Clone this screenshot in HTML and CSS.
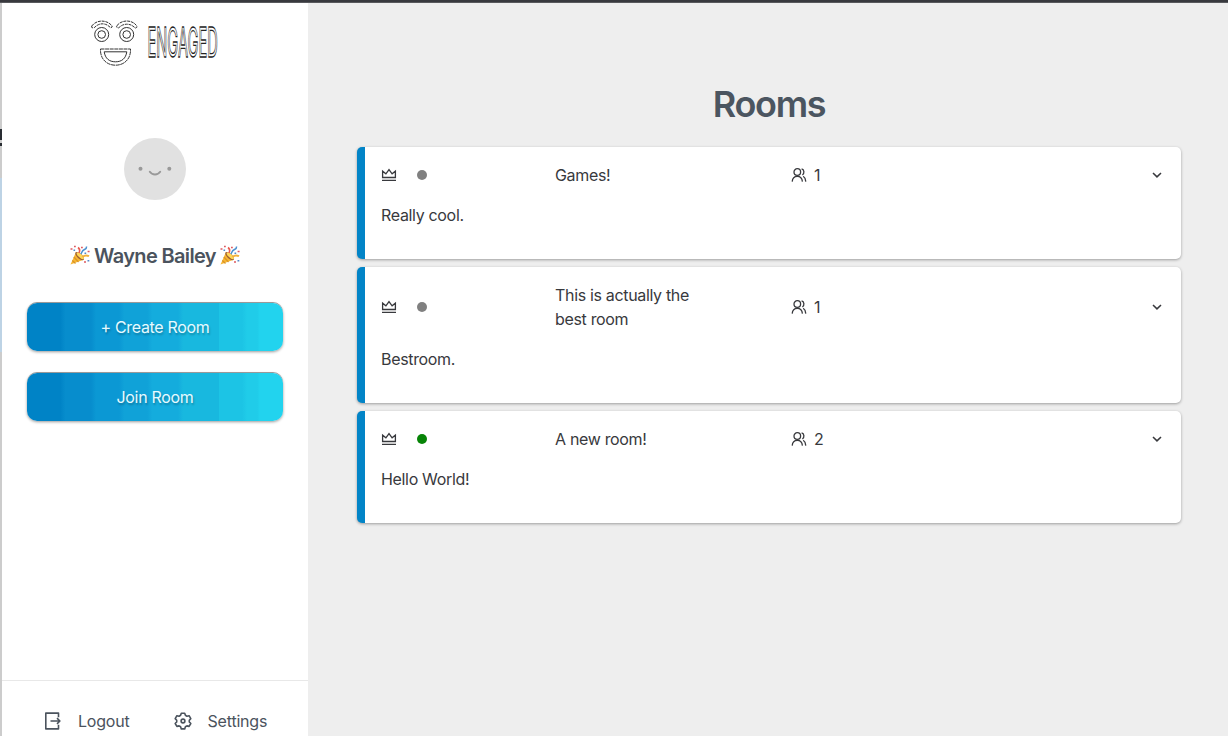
FILE: index.html
```html
<!DOCTYPE html>
<html lang="en">
<head>
<meta charset="utf-8">
<title>Engaged</title>
<link rel="stylesheet" href="styles.css">
</head>
<body>
<svg class="defs" width="0" height="0" aria-hidden="true">
  <symbol id="crown" viewBox="0 0 16 16"><path d="M1.600 10.500V4.200l3.300 2.600L8 2.700l3.100 4.100 3.300-2.600v6.300zM1 13.400h14"/></symbol>
  <symbol id="users" viewBox="0 0 16 16"><circle cx="6.300" cy="5" r="3.300"/><path d="M1.200 14.600c.3-3.400 2.200-5.200 5.100-5.200s4.800 1.800 5.100 5.200M10.600 1.900c2.800.6 3 4.600.8 6.100M12.200 9.300c1.600 1 2.400 2.700 2.600 5.300"/></symbol>
  <symbol id="chevron" viewBox="0 0 10 10"><path d="M1 3 5 6.900 9 3"/></symbol>
  <symbol id="popper" viewBox="0 0 22 22">
    <path d="M1.500 19.500 6.800 7.500l7.800 7.200z" fill="#f7b733"/>
    <path d="m4.800 12 4.700 5M3.300 15.500l3.200 3" stroke="#d99228" stroke-width="1.200"/>
    <ellipse cx="10.700" cy="11.100" rx="2.500" ry="5.500" transform="rotate(-47 10.700 11.100)" fill="#9c5f35"/>
    <ellipse cx="11.300" cy="10.800" rx="1.800" ry="4.600" transform="rotate(-47 11.300 10.800)" fill="#ffd659"/>
    <path d="M10 8c1-2 1-4-1-5.500" stroke="#e85a4f" stroke-width="1.600" fill="none"/>
    <path d="M12 9c1-2 1-3.500 3.500-4.500s2-2 2-3" stroke="#4a90d0" stroke-width="1.500" fill="none"/>
    <path d="M13.500 12c2-2 4-2 6.500-.8" stroke="#f3b13c" stroke-width="2" fill="none"/>
    <path d="M1.500 4h2M5 1.500h1.800M12 2.500h1.800M18.600 6.500h2M15 17h2" stroke="#df5b62" stroke-width="1.600"/>
    <path d="M4.500 5.200h1.600M18.500 15.800h1.800M15.500 8.300h1.700" stroke="#5489ca" stroke-width="1.500"/>
  </symbol>
</svg>
<div class="topbar"></div>
<div class="app">
  <div class="edge"><div class="edge-mark"></div><div class="edge-tick"></div><div class="edge-select"></div></div>
  <aside class="sidebar">
    <svg class="logo" viewBox="0 0 130 60" role="img" aria-label="Engaged">
      <g fill="#fff" stroke="#333" stroke-width="1">
        <path d="M1.700 7C6.500.6 16.500.4 21.700 6.500q1.500 1.800-1 2.300c-5-5.300-11.500-5.300-16.500-.1Q1 9.500 1.700 7zM27 6.500c5-6.100 15-5.900 19.500 0q1.400 2-1.200 2.600c-4.600-5-11.600-5.300-16.600-.3Q25.600 9 27 6.500z" stroke-dasharray="3 .8"/>
        <circle cx="11.700" cy="15.500" r="7"/><circle cx="11.700" cy="15.500" r="3.800"/>
        <circle cx="36.700" cy="15.500" r="7"/><circle cx="36.700" cy="15.500" r="3.800"/>
        <path d="M10.500 30h30c.5 10-6.300 16.200-15 16.200s-15.500-6.200-15-16.200z" stroke-dasharray="4 .6"/>
        <path d="M14.200 32.800h22.600c-1 6.700-5 10-11.300 10s-10.300-3.300-11.300-10z"/>
      </g>
      <g transform="translate(57.500 38) scale(.352 1)"><text class="wordmark" textLength="200">ENGAGED</text></g>
    </svg>
    <svg class="avatar" viewBox="0 0 62 62"><circle cx="31" cy="31" r="31" fill="#e1e1e1"/><circle cx="16.500" cy="30.700" r="2" fill="#999"/><circle cx="45.300" cy="30.700" r="2" fill="#999"/><path d="M25.800 33.700c2.500 3.600 7.900 3.600 10.400 0" fill="none" stroke="#999" stroke-width="2" stroke-linecap="round"/></svg>
    <h2 class="user"><svg class="popper"><use href="#popper"/></svg><span>Wayne Bailey</span><svg class="popper"><use href="#popper"/></svg></h2>
    <div class="actions">
      <button class="btn">+ Create Room</button>
      <button class="btn">Join Room</button>
    </div>
    <nav class="footer">
      <a class="link"><svg class="nav-icon" viewBox="0 0 18 18"><path d="M14.500 5.300V1.100H1.800v15.800h12.700v-4.200M6.500 9h9.300M13 6.200 15.900 9 13 11.800"/></svg><span>Logout</span></a>
      <a class="link"><svg class="nav-icon" viewBox="0 0 18 18"><path d="M7.300 1.200h3.400l.7 2.100 1.500.9 2.200-.5 1.700 2.900-1.500 1.600v1.700l1.500 1.600-1.700 2.900-2.200-.5-1.500.9-.7 2.100H7.300l-.7-2.100-1.500-.9-2.200.5-1.700-2.900 1.500-1.600V8.200L1.200 6.600l1.700-2.900 2.200.5 1.500-.9z"/><circle cx="9" cy="9" r="1.900"/></svg><span>Settings</span></a>
    </nav>
  </aside>
  <main class="main">
    <h1 class="title">Rooms</h1>
    <section class="rooms">
      <article class="room">
        <header class="room-head"><svg class="icon"><use href="#crown"/></svg><i class="dot"></i><span class="name">Games!</span><span class="count"><svg class="icon"><use href="#users"/></svg>1</span><svg class="chevron"><use href="#chevron"/></svg></header>
        <p class="desc">Really cool.</p>
      </article>
      <article class="room">
        <header class="room-head"><svg class="icon"><use href="#crown"/></svg><i class="dot"></i><span class="name">This is actually the best room</span><span class="count"><svg class="icon"><use href="#users"/></svg>1</span><svg class="chevron"><use href="#chevron"/></svg></header>
        <p class="desc">Bestroom.</p>
      </article>
      <article class="room">
        <header class="room-head"><svg class="icon"><use href="#crown"/></svg><i class="dot online"></i><span class="name">A new room!</span><span class="count"><svg class="icon"><use href="#users"/></svg>2</span><svg class="chevron"><use href="#chevron"/></svg></header>
        <p class="desc">Hello World!</p>
      </article>
    </section>
  </main>
</div>
</body>
</html>
```
FILE: styles.css
```css
* { box-sizing: border-box; }
body { margin: 0; height: 736px; overflow: hidden; display: flex; flex-direction: column; font: 16px/24px Inter, "Liberation Sans", sans-serif; letter-spacing: -.33px; color: #38393d; background: #eee; }
h1, h2, p { margin: 0; }
.defs { position: absolute; }
.topbar { height: 3px; flex: none; background: #38393e; border-bottom: 1px solid #58595d; }
.app { flex: 1; display: flex; min-height: 0; }
.edge { width: 2px; background: #ccc; display: flex; flex-direction: column; }
.edge-mark { height: 11px; margin-top: 126px; background: #292d33; }
.edge-tick { height: 3px; margin-top: 3px; background: #292d33; }
.edge-select { height: 174px; margin-top: 32px; background: #bdd3e5; }
.sidebar { width: 306px; background: #fff; display: flex; flex-direction: column; align-items: center; color: #4b535d; }
.logo { width: 130px; height: 60px; margin-top: 16px; flex: none; overflow: visible; }
.wordmark { font: 400 41.500px Inter, sans-serif; letter-spacing: 0; fill: #fff; stroke: #222; stroke-width: 1.300px; }
.avatar { width: 62px; height: 62px; margin-top: 59px; flex: none; }
.user { display: flex; align-items: center; gap: 3px; margin-top: 42px; font-size: 20px; line-height: 28px; font-weight: 600; letter-spacing: -.65px; }
.popper { width: 22px; height: 22px; }
.actions { display: flex; flex-direction: column; gap: 22px; margin-top: 33px; }
.btn { width: 256px; height: 48px; border: 0; border-radius: 10px; padding: 0; color: #e6faff; font: inherit; letter-spacing: -.32px; background: linear-gradient(90deg, #0083c6 0 13%, #078dcd 15% 25%, #0b98d4 27% 36%, #10a2d8 38% 47%, #14acdd 49% 59%, #18b8df 61% 75%, #1cc4e5 75% 84%, #20cce9 86% 90%, #22d3ee 91%); box-shadow: 0 -1px 0 #999, 0 1px 3px rgba(0,0,0,.4); text-shadow: 1px 2px 2px rgba(0,0,0,.25); }
.footer { width: 100%; height: 56px; margin-top: auto; border-top: 1px solid #e8e8e8; display: flex; gap: 44px; padding: 28px 0 0 42px; }
.link { display: flex; align-items: center; gap: 16px; height: 24px; letter-spacing: -.2px; }
.nav-icon { width: 18px; height: 18px; fill: none; stroke: #4b535d; stroke-width: 1.600; stroke-linejoin: round; }
.main { flex: 1; padding: 76px 47px 0 49px; }
.title { text-align: center; font-size: 36px; line-height: 50px; font-weight: 600; letter-spacing: -1.300px; color: #4b5560; }
.rooms { display: flex; flex-direction: column; gap: 8px; margin-top: 18px; }
.room { border-left: 8px solid #0284c7; border-radius: 5px; background: #fff; padding: 16px 16px 32px; box-shadow: 0 1px 3px rgba(0,0,0,.35); }
.room-head { display: grid; grid-template-columns: 35.500px 138.500px 144px 1fr 16px; align-items: center; margin-bottom: 16px; }
.icon { width: 16px; height: 16px; fill: none; stroke: #38393d; stroke-width: 1.300; }
.dot { width: 10.500px; height: 10.500px; border-radius: 50%; background: #808080; }
.online { background: #078407; }
.count { display: flex; align-items: center; gap: 7px; margin-left: 92px; }
.chevron { width: 10px; height: 10px; fill: none; stroke: #38393d; stroke-width: 1.500; justify-self: center; }
```
